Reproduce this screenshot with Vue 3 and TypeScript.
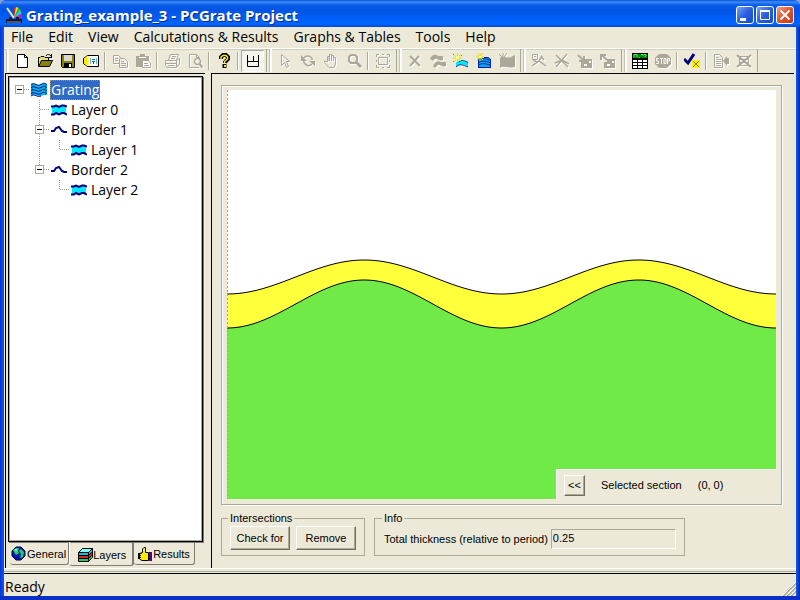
<script setup lang="ts">
import { computed, ref } from 'vue'

interface Shape { d: string; f?: string; s?: string; w?: number }
interface Tool { icon: string; label: string; off?: boolean; pressed?: boolean; sep?: boolean }
interface Node { id: string; label: string; icon: string; cells: string[]; parent?: string; open?: boolean }

const G = '#aca899'
const K = '#000000'
const N = '#00007b'

const icons: Record<string, Shape[]> = {
  app: [
    { d: 'M1 1L8 11', s: '#e8e8f0', w: 2 }, { d: 'M8 11L8 1L11 0Z', f: '#e02020' }, { d: 'M8 11L10 0L13 1Z', f: '#f0e020' },
    { d: 'M8 11L12 1L15 3Z', f: '#20c040' }, { d: 'M8 11L14 3L16 7Z', f: '#20d0e8' }, { d: 'M8 11L16 6L16 11Z', f: '#c020c0' },
    { d: 'M0 12H3V10H6V12H10V10H13V12H16V16H0Z', f: '#181830' }, { d: 'M1 15H15', s: '#909098' },
  ],
  new: [{ d: 'M3.5 1.5H10.5L13.5 4.5V14.5H3.5Z', f: '#fff', s: K }, { d: 'M10.5 1.5V4.5H13.5', s: K }],
  open: [
    { d: 'M1.5 13V4.5H3L4 3.5H7L8 4.5H11.5V7', f: '#e8e070', s: K }, { d: 'M1.5 13.5L4.5 7.5H15.5L12.5 13.5Z', f: '#848400', s: K },
    { d: 'M9 3C10 1 12 1 14 3M14.5 1V4.5M12 4.5H15', s: K },
  ],
  save: [{ d: 'M1.5 1.5H14.5V14.5H2.5L1.5 13.5Z', f: '#848400', s: K }, { d: 'M4 2H12V8H4Z', f: '#d8d8d0' }, { d: 'M4 10H12V15H4Z', f: K }, { d: 'M9 11H11V14H9Z', f: '#fff' }],
  props: [
    { d: 'M4.5 2.5H15.5V13.5H4.5L0.5 10.5V5.5Z', f: '#fff', s: K }, { d: 'M4 3V13L1 10V6Z', f: '#ffe600' },
    { d: 'M5 3V13', s: '#ffe600' }, { d: 'M7.5 5V11M13.5 5V11', s: '#60b8c8' }, { d: 'M9 6.5H12M9 8.5H12M10.5 9V11', s: '#0070a0' },
  ],
  copy: [{ d: 'M1.5 2.5H6.5L8.5 4.5V10.5H1.5Z', s: G }, { d: 'M3 5.5H6M3 7.5H6', s: G }, { d: 'M7.5 5.5H12.5L15.5 8.5V14.5H7.5Z', f: '#f3f1e7', s: G }, { d: 'M9 8.5H12M9 10.5H14M9 12.5H14', s: G }],
  paste: [{ d: 'M1 3H5V1H10V3H14V14H1Z', f: G }, { d: 'M4 4.5H11', s: '#fff' }, { d: 'M7.5 7.5H13L15.5 10V14.5H7.5Z', f: '#fff', s: G }, { d: 'M9 10.5H13M9 12.5H14', s: G }],
  print: [{ d: 'M4.5 7L6.5 1.5H14.5L12.5 7M8 3.5H12M7 5.5H11', s: G }, { d: 'M1.5 7.5H12.5L15.5 5.5V11L12.5 14.5H3L1.5 12Z', s: G }, { d: 'M2 10.5H12.5M4 12.5H11M12.5 7.5V14', s: G }],
  preview: [{ d: 'M2.5 1.5H9.5L12.5 4.5V6M2.5 1.5V14.5H12M9.5 1.5V4.5H12', s: G }, { d: 'M9.5 5.5H11.5L13.5 7.5V9.5L11.5 11.5H9.5L7.5 9.5V7.5Z', s: G, w: 1.5 }, { d: 'M12.5 11L15.5 14.5', s: G, w: 2 }],
  help: [{ d: 'M5 6V4L7 2H10L12 4V6L9 9V10', s: K, w: 4 }, { d: 'M6.5 11H10.5V15H6.5Z', f: K }, { d: 'M5 6V4L7 2.5H10L11.5 4V6L8.5 8.5V10', s: '#ffe600', w: 1.5 }, { d: 'M8 12H10V14H8Z', f: '#ffe600' }],
  frame: [{ d: 'M2.5 2V13.5H13.5V2M2.5 8.5H13.5M8.5 3V8', s: K }],
  arrow: [{ d: 'M4.5 1.5V12.5L7.5 9.5L9.5 14.5L11.5 13.5L9.5 8.5H13Z', s: G }],
  rotate: [{ d: 'M4 5C6 2 11 2 12.5 7M12 11C9 14 5 13 3.5 8', s: G, w: 1.5 }, { d: 'M1 2V8H7ZM15 13V8H9Z', f: G }],
  hand: [{ d: 'M4.5 9V3.5H6V8M6.5 8V1.5H8.5V8M8.5 2.5H10.5V8M10.5 4.5H12.5V11L11 14.5H6L1.5 9.5V8L4.5 9', s: G }],
  zoom: [{ d: 'M5 2H9L11 4V8L9 10H5L3 8V4Z', s: G, w: 2 }, { d: 'M10 9L15 14', s: G, w: 3 }],
  fit: [{ d: 'M3.5 4.5H12.5V11.5H3.5Z', s: G }, { d: 'M1.5 4V1.5H4M12 1.5H14.5V4M14.5 12V14.5H12M4 14.5H1.5V12M7 1.5H9M7 14.5H9M1.5 7V9M14.5 7V9', s: G }],
  cross: [{ d: 'M3 3L13 13M12 3L3 13', s: G, w: 2 }],
  layerOff: [{ d: 'M0 6C2 1 6 1 8 3L13 3V7C9 9 7 5 5 6L3 8Z', f: G }, { d: 'M3 13C6 7 9 8 11 9L16 9L16 13C12 15 10 11 8 12L5 15Z', f: G }],
  addLayer: [
    { d: 'M3 14V10C6 6 10 8 15 9V14C11 11 8 10 3 14Z', f: '#00e8ff' },
    { d: 'M3 14C7 10 10 12 15 14M6 9C9 6 12 8 15 9.5', s: '#0038a8' },
    { d: 'M1 2L8 8M8 1L1 9M4.5 0V9M0 5H9', s: '#f0dc00' }, { d: 'M3 3H6V6H3Z', f: '#ffff80' }, { d: 'M0 1H1V2H0ZM8 2H9V3H8ZM0 8H1V9H0Z', f: '#d86020' },
  ],
  addBlock: [
    { d: 'M2 6C5 3 9 7 12 4L15 6V15H2Z', f: '#00a8f0' },
    { d: 'M2 7.5C6 4.5 9 5.5 15 7.5M2 10C6 7 9 8 15 10M2 12.5C6 9.5 9 10.5 15 12.5M2 14.5H15M2.5 7V15M14.5 6V15M8 4.5L12 4.5L15 7', s: '#0020a0' },
    { d: 'M1 1L7 7M7 0L1 7M4 0V8M0 4H8', s: '#f0dc00' }, { d: 'M3 3H5V5H3Z', f: '#ffff80' },
  ],
  blockOff: [{ d: 'M1 5C5 2 8 6 12 4L16 2V14C10 16 6 12 1 15Z', f: G }, { d: 'M0 1L4 5M8 0L5 4M4 0V4', s: G }],
  edge: [{ d: 'M1.5 1.5H6.5V6.5H1.5ZM3 3.5H5', s: G }, { d: 'M1 13L8 8L15 13M8 8L11 3M6 9L2 7M10 3L13 7', s: G, w: 1.5 }],
  cut: [{ d: 'M2 2L14 14M13 1L2 14M1 10L8 7L15 11', s: G, w: 1.5 }],
  imp: [{ d: 'M7 6H15V15H4V9H7Z', f: G }, { d: 'M1 2L6 7M7 3V8H2', s: G, w: 2 }, { d: 'M7 11H10V13H7ZM12 8H14V10H12Z', f: '#fff' }],
  exp: [{ d: 'M7 6H15V15H4V9H7Z', f: G }, { d: 'M2 2L7 7M1 7V2H6', s: G, w: 2 }, { d: 'M7 11H10V13H7ZM12 8H14V10H12Z', f: '#fff' }],
  calc: [{ d: 'M0 0H16V16H0Z', f: K }, { d: 'M1 1H15V5H1Z', f: '#008000' }, { d: 'M2 4.5V1.5H5V4.5M7 4.5H8M9 1.5H11V3M12 1.5H14L13 4.5', s: '#40ff40' }, { d: 'M1 7H5V9H1ZM6 7H10V9H6ZM11 7H15V9H11ZM1 10H5V12H1ZM6 10H10V12H6ZM11 10H15V12H11ZM1 13H5V15H1ZM6 13H10V15H6ZM11 13H15V15H11Z', f: '#fff' }],
  stop: [{ d: 'M4 1H12L16 5V11L12 15H4L0 11V5Z', f: G }, { d: 'M4 5.5H1.5V8H3.5V10.5H1M5 5.5H8M6.5 5V11M9 5.5H11V10.5H9ZM12.5 11V5.5H14.5V8H13', s: '#fff' }],
  check: [{ d: 'M0 6L4 10L10 1', s: N, w: 3 }, { d: 'M8 7H16V15H8Z', f: '#ffee00' }, { d: 'M9 8L15 14M15 8L9 14', s: '#808000' }],
  report: [{ d: 'M1.5 1.5H6.5L9.5 4.5V14.5H1.5ZM3 4.5H6M3 6.5H8M3 8.5H8M3 10.5H8M3 12.5H8', s: G }, { d: 'M10 8L14 3V13ZM14 5H16V11H14Z', f: G }],
  clear: [{ d: 'M1 2L15 14M15 2L1 14', s: G, w: 2 }, { d: 'M3 3.5H13M3 6.5H13M3 9.5H13M3 12.5H13M3.5 3V13M12.5 3V13', s: G }],
  grating: [{ d: 'M0 2C4 0 6 5 10 2C12 1 14 1 16 2V13C12 12 10 16 6 13C4 12 2 13 0 14Z', f: '#00b8f0' }, { d: 'M0 2.5C4 0 6 5 10 2.5S14 2 16 2.5M0 5.5C4 3 6 8 10 5.5S14 5 16 5.5M0 8.5C4 6 6 11 10 8.5S14 8 16 8.5M0 11.5C4 9 6 14 10 11.5S14 11 16 11.5M0 14C4 11 6 16 10 14', s: N }, { d: 'M1 2V14M14.5 3V13', s: '#0068b8' }],
  layer: [{ d: 'M1 4C5 2 7 6 11 3L15 4V12H1Z', f: '#00e8ff' }, { d: 'M0 4.5H3L5 3.5L8 5L11 3.5H13L16 4.5M0 12.5H3L5 11L8 12.5L11 11H13L16 12.5', s: N, w: 2 }],
  border: [{ d: 'M0 9H3L5 6L8 5L11 9L13 10H16', s: N, w: 2 }],
  globe: [{ d: 'M5 1H10L14 5V10L10 14H5L1 10V5Z', f: '#0018b0', s: '#000040' }, { d: 'M5 2H8L7 5L8 7L5 9L3 6L2 4ZM10 3L13 6L12 11L9 12L10 8L8 5Z', f: '#20d060' }, { d: 'M4 3H6V5H4Z', f: '#80f0ff' }],
  stack: [{ d: 'M1.5 5.5L5.5 1.5H15.5L11.5 5.5Z', f: '#80f8ff', s: K }, { d: 'M1.5 5.5H11.5V8.5H1.5ZM11.5 5.5L15.5 1.5V4.5L11.5 8.5', f: '#00c8d8', s: K }, { d: 'M1.5 8.5H11.5V11.5H1.5ZM11.5 8.5L15.5 4.5V7.5L11.5 11.5', f: '#e02020', s: K }, { d: 'M1.5 11.5H11.5V14.5H1.5ZM11.5 11.5L15.5 7.5V10.5L11.5 14.5', f: '#20d040', s: K }],
  thumb: [{ d: 'M2.5 7.5L5.5 6.5V3L7 1.5H8.5V6.5H11.5V14.5H5L2.5 13Z', f: '#ffee00', s: K }, { d: 'M12 6H15V15H12Z', f: '#600070' }, { d: 'M1 7.5H4.5M1.5 8V13M2.5 9.5H4M2.5 11.5H4', s: K }],
}

const bands: Tool[][] = [
  [
    { icon: 'new', label: 'New' }, { icon: 'open', label: 'Open' }, { icon: 'save', label: 'Save' }, { icon: 'props', label: 'Properties' },
    { icon: 'copy', label: 'Copy', off: true, sep: true }, { icon: 'paste', label: 'Paste', off: true },
    { icon: 'print', label: 'Print', off: true, sep: true }, { icon: 'preview', label: 'Print preview', off: true },
    { icon: 'help', label: 'Help topics', sep: true }, { icon: 'frame', label: 'Show panel', pressed: true, sep: true },
  ],
  [
    { icon: 'arrow', label: 'Select', off: true }, { icon: 'rotate', label: 'Rotate', off: true }, { icon: 'hand', label: 'Pan', off: true },
    { icon: 'zoom', label: 'Zoom', off: true }, { icon: 'fit', label: 'Fit', off: true, sep: true },
  ],
  [
    { icon: 'cross', label: 'Delete', off: true }, { icon: 'layerOff', label: 'Split layer', off: true }, { icon: 'addLayer', label: 'Add layer' },
    { icon: 'addBlock', label: 'Add block' }, { icon: 'blockOff', label: 'Edit block', off: true },
  ],
  [
    { icon: 'edge', label: 'Edit border', off: true }, { icon: 'cut', label: 'Remove border', off: true },
    { icon: 'imp', label: 'Import', off: true }, { icon: 'exp', label: 'Export', off: true },
  ],
  [
    { icon: 'calc', label: 'Calculate' }, { icon: 'stop', label: 'Stop', off: true }, { icon: 'check', label: 'Verify', sep: true },
    { icon: 'report', label: 'Report', off: true, sep: true }, { icon: 'clear', label: 'Clear results', off: true },
  ],
]

const menus = ['File', 'Edit', 'View', 'Calcutations & Results', 'Graphs & Tables', 'Tools', 'Help']

const nodes: Node[] = [
  { id: 'g', label: 'Grating', icon: 'grating', cells: ['dash'], open: true },
  { id: 'l0', label: 'Layer 0', icon: 'layer', cells: ['', 'tee'], parent: 'g' },
  { id: 'b1', label: 'Border 1', icon: 'border', cells: ['', 'tee'], parent: 'g', open: true },
  { id: 'l1', label: 'Layer 1', icon: 'layer', cells: ['', 'bar', 'elbow'], parent: 'b1' },
  { id: 'b2', label: 'Border 2', icon: 'border', cells: ['', 'elbow'], parent: 'g', open: true },
  { id: 'l2', label: 'Layer 2', icon: 'layer', cells: ['', '', 'elbow'], parent: 'b2' },
]
const lines: Record<string, string> = {
  '': '', dash: 'M10 9.5H20', tee: 'M9.5 0V20M10 9.5H20', bar: 'M9.5 0V20', elbow: 'M9.5 0V10M10 9.5H20',
}
const closed = ref<string[]>([])
const selected = ref('g')
const shown = computed(() => nodes.filter((n) => {
  for (let p = n.parent; p; p = nodes.find((m) => m.id === p)?.parent) if (closed.value.includes(p)) return false
  return true
}))
function toggle(id: string) {
  closed.value = closed.value.includes(id) ? closed.value.filter((c) => c !== id) : [...closed.value, id]
}

const tabs = [
  { id: 'General', icon: 'globe' },
  { id: 'Layers', icon: 'stack' },
  { id: 'Results', icon: 'thumb' },
]
const tab = ref('Layers')
const thickness = ref('0.25')

function wave(mid: number, amp: number): string {
  const pts: string[] = []
  for (let x = 0; x <= 549; x += 3) pts.push(`${x} ${(mid + amp * Math.cos((2 * Math.PI * x) / 274.5)).toFixed(2)}`)
  return 'M' + pts.join('L')
}
const upper = wave(187, 17)
const lower = wave(214, 24)
</script>

<template>
  <div class="window">
    <header class="title">
      <svg class="ico" viewBox="0 0 16 16" aria-hidden="true">
        <path v-for="(p, i) in icons.app" :key="i" :d="p.d" :fill="p.f || 'none'" :stroke="p.s || 'none'" :stroke-width="p.w || 1" />
      </svg>
      <h1>Grating_example_3 - PCGrate Project</h1>
      <button class="cap" aria-label="Minimize"><svg viewBox="0 0 16 16"><path d="M3 11H9V14H3Z" fill="#fff" /></svg></button>
      <button class="cap" aria-label="Maximize"><svg viewBox="0 0 16 16"><path d="M3.5 3.5H12.5V12.5H3.5Z" fill="none" stroke="#fff" /><path d="M3 3H13V5H3Z" fill="#fff" /></svg></button>
      <button class="cap close" aria-label="Close"><svg viewBox="0 0 16 16"><path d="M3.5 3.5L12.5 12.5M12.5 3.5L3.5 12.5" stroke="#fff" stroke-width="2" /></svg></button>
    </header>

    <nav class="menu">
      <button v-for="m in menus" :key="m">{{ m }}</button>
    </nav>

    <div class="toolbar" role="toolbar">
      <div v-for="(b, bi) in bands" :key="bi" class="band">
        <template v-for="t in b" :key="t.icon">
          <span v-if="t.sep" class="sep"></span>
          <button class="tool" :class="{ off: t.off, pressed: t.pressed }" :disabled="t.off" :aria-label="t.label">
            <svg class="ico" viewBox="0 0 16 16">
              <path v-for="(p, i) in icons[t.icon]" :key="i" :d="p.d" :fill="p.f || 'none'" :stroke="p.s || 'none'" :stroke-width="p.w || 1" />
            </svg>
          </button>
        </template>
      </div>
    </div>

    <main class="work">
      <aside class="side">
        <ul class="tree">
          <li v-for="n in shown" :key="n.id">
            <span v-for="(c, ci) in n.cells" :key="ci" class="cell">
              <svg viewBox="0 0 20 20"><path :d="lines[c]" fill="none" stroke="#9c9a8c" stroke-dasharray="1 1" /></svg>
              <button v-if="n.open && ci === n.cells.length - 1" class="exp" :aria-label="'Toggle ' + n.label" @click="toggle(n.id)">
                <svg viewBox="0 0 7 7"><path :d="closed.includes(n.id) ? 'M1 3.5H6M3.5 1V6' : 'M1 3.5H6'" stroke="#000" /></svg>
              </button>
            </span>
            <svg class="ico" viewBox="0 0 16 16">
              <path v-for="(p, i) in icons[n.icon]" :key="i" :d="p.d" :fill="p.f || 'none'" :stroke="p.s || 'none'" :stroke-width="p.w || 1" />
            </svg>
            <button class="label" :class="{ sel: selected === n.id }" @click="selected = n.id">{{ n.label }}</button>
          </li>
        </ul>
        <div class="tabs" role="tablist">
          <button v-for="t in tabs" :key="t.id" role="tab" :class="{ on: tab === t.id }" :aria-selected="tab === t.id" @click="tab = t.id">
            <svg class="ico" viewBox="0 0 16 16">
              <path v-for="(p, i) in icons[t.icon]" :key="i" :d="p.d" :fill="p.f || 'none'" :stroke="p.s || 'none'" :stroke-width="p.w || 1" />
            </svg>{{ t.id }}
          </button>
        </div>
      </aside>

      <section class="view">
        <div class="frame">
          <div class="plot">
            <svg viewBox="0 0 549 409" preserveAspectRatio="none" role="img" aria-label="Grating profile">
              <path :d="upper + 'V409H0Z'" fill="#ffff3c" />
              <path :d="lower + 'V409H0Z'" fill="#6fea46" />
              <path :d="upper" class="curve" />
              <path :d="lower" class="curve" />
              <path d="M0.5 0V409" stroke="#a0a098" stroke-dasharray="2 2" />
            </svg>
            <div class="section">
              <button class="push">&lt;&lt;</button>
              <span>Selected section</span>
              <span>(0, 0)</span>
            </div>
          </div>
        </div>
        <div class="groups">
          <fieldset class="inter">
            <legend>Intersections</legend>
            <button class="push">Check for</button>
            <button class="push">Remove</button>
          </fieldset>
          <fieldset class="info">
            <legend>Info</legend>
            <label for="thick">Total thickness (relative to period)</label>
            <input id="thick" v-model="thickness" type="text" readonly />
          </fieldset>
        </div>
      </section>
    </main>

    <footer class="status">
      <span>Ready</span>
      <svg viewBox="0 0 14 14" aria-hidden="true">
        <path d="M1 14L14 1M5 14L14 5M9 14L14 9" stroke="#aca899" stroke-width="2" />
        <path d="M0 14L14 0M4 14L14 4M8 14L14 8" stroke="#fff" />
      </svg>
    </footer>
  </div>
</template>

<style>
body { margin: 0; background: #7e9ce0; }
</style>

<style scoped>
* { box-sizing: border-box; }
.window {
  display: flex;
  flex-direction: column;
  min-height: 100vh;
  padding: 0 4px 4px;
  background: linear-gradient(90deg, #0831d9, #0855e8 3px, #0855e8 calc(100% - 3px), #001ea0);
  box-shadow: inset 0 -4px 0 #0a2fc4;
  border-radius: 7px 7px 0 0;
  font-family: "Open Sans", "Noto Sans", sans-serif;
  font-size: 14px;
  color: #000;
}
button { padding: 0; border: 0; background: none; font: inherit; color: inherit; }
.ico { display: block; flex: none; width: 16px; height: 16px; }

.title {
  display: flex;
  align-items: center;
  gap: 2px;
  height: 27px;
  margin: 0 -4px;
  padding: 3px 6px 0;
  border-radius: 7px 7px 0 0;
  background: linear-gradient(#0a50d8, #3c8cf8 2px, #0a5ce8 5px, #0054e3 10px, #0060fa 20px, #0066ff 24px, #0048d0);
}
.title h1 {
  flex: 1;
  margin: 0 0 0 2px;
  font: bold 15px/20px "Open Sans", "Noto Sans", sans-serif;
  color: #fff;
  text-shadow: 1px 1px 0 #0a2c90;
}
.cap {
  width: 18px;
  height: 18px;
  border: 1px solid #fff;
  border-radius: 3px;
  background: linear-gradient(135deg, #7ba2f0, #2a5fe0 50%, #1c48c8);
}
.cap svg { display: block; width: 16px; height: 16px; }
.cap.close { background: linear-gradient(135deg, #f0a088, #e0522c 50%, #c03810); }

.menu {
  display: flex;
  gap: 15px;
  height: 21px;
  padding: 0 7px 2px;
  background: #ece9d8;
}
.menu button { line-height: 18px; white-space: nowrap; }

.toolbar {
  display: flex;
  height: 25px;
  padding: 0 0 1px 3px;
  background: #ece9d8;
  border-top: 1px solid #fff;
  box-shadow: inset 0 1px 0 #d0cdbd;
}
.band {
  display: flex;
  align-items: center;
  padding: 0 2px;
  margin-right: 3px;
  border-right: 1px solid #aca899;
  border-left: 1px solid #fff;
  box-shadow: inset 1px 0 0 #fbfaf5, -1px 0 0 #c4c1b0;
}
.tool { display: grid; place-items: center; width: 23px; height: 22px; }
.tool.off .ico { filter: drop-shadow(1px 1px 0 #fff); }
.tool.pressed { background: #f6f4ec; border: 1px solid; border-color: #aca899 #fff #fff #aca899; }
.sep { width: 6px; height: 18px; background: linear-gradient(90deg, transparent 2px, #aca899 2px, #aca899 3px, #fff 3px, #fff 4px, transparent 4px); }

.work { display: flex; flex: 1; gap: 6px; padding-left: 1px; background: #ece9d8; }
.side {
  display: flex;
  flex-direction: column;
  flex: none;
  width: 200px;
  padding: 2px 0 0 2px;
  border: solid #000;
  border-width: 1px 0 0 1px;
}
.tree {
  flex: 1;
  margin: 0 2px 0 0;
  padding: 3px 0 3px 1px;
  list-style: none;
  background: #fff;
  border: 1px solid #000;
  outline: 1px solid #aca899;
  outline-offset: -2px;
  box-shadow: 1px 1px 0 #807d70;
}
.tree li { display: flex; align-items: center; height: 20px; }
.cell { display: grid; width: 20px; height: 20px; place-items: center; }
.cell > * { grid-area: 1 / 1; }
.cell > svg { width: 20px; height: 20px; }
.exp { width: 9px; height: 9px; margin: 0 1px 1px 0; border: 1px solid #aca899; background: #fff; }
.exp svg { display: block; width: 7px; height: 7px; }
.tree .ico { margin: 0 3px 0 1px; }
.label { height: 20px; padding: 0 1px; line-height: 20px; white-space: nowrap; }
.label.sel { background: #316ac5; color: #fff; outline: 1px dotted #c08a30; outline-offset: -1px; }

.tabs {
  display: flex;
  align-items: flex-start;
  height: 26px;
  padding-left: 2px;
  font: 11px/16px "Liberation Sans", sans-serif;
}
.tabs button {
  display: flex;
  align-items: center;
  height: 22px;
  margin-top: 1px;
  padding: 0 2px 0 1px;
  border: solid #807d70;
  border-width: 0 1px 1px 0;
  border-radius: 0 0 3px 3px;
}
.tabs .on { height: 24px; margin-top: 0; padding: 2px 6px 0 7px; border-left: 1px solid #fff; border-right: 2px solid #807d70; }
.tabs .on + button { padding: 0 4px 0 3px; }

.view {
  display: flex;
  flex-direction: column;
  flex: 1;
  gap: 7px;
  min-width: 0;
  margin-right: 2px;
  padding: 11px 12px 12px 9px;
  border: solid #000;
  border-width: 1px 0 0 1px;
  font: 11px/13px "Liberation Sans", sans-serif;
}
.frame {
  display: flex;
  flex: 1;
  padding: 4px 5px 5px;
  border: 1px solid #aca899;
  box-shadow: 1px 1px 0 #fff, inset 1px 1px 0 #fff;
}
.plot { position: relative; flex: 1; min-height: 200px; background: #fff; }
.plot > svg { position: absolute; inset: 0; width: 100%; height: 100%; }
.curve { fill: none; stroke: #000; vector-effect: non-scaling-stroke; }
.section {
  position: absolute;
  right: 0;
  bottom: 0;
  display: flex;
  align-items: center;
  gap: 16px;
  width: 220px;
  height: 30px;
  padding: 2px 6px 0 7px;
  background: #ece9d8;
  border: solid #fff;
  border-width: 1px 0 0 1px;
}
.push {
  background: #ece9d8;
  border: 1px solid;
  border-color: #fff #716f64 #716f64 #fff;
  box-shadow: inset -1px -1px 0 #aca899;
}
.section .push { width: 21px; height: 21px; }

.groups { display: flex; gap: 9px; }
fieldset {
  display: flex;
  align-items: center;
  height: 44px;
  margin: 0;
  padding: 0 8px 4px;
  border: 1px solid #aca899;
  min-width: 0;
}
legend { padding: 0 2px; margin-left: -2px; }
.inter { gap: 6px; }
.inter .push { width: 60px; height: 24px; }
.info { gap: 3px; padding: 0 8px 2px 9px; }
.info input {
  width: 125px;
  height: 20px;
  padding: 0 1px 3px;
  border: 1px solid;
  border-color: #aca899 #fff #fff #aca899;
  background: #ece9d8;
  font: inherit;
}

.status {
  display: flex;
  align-items: flex-end;
  justify-content: space-between;
  height: 28px;
  padding-left: 1px;
  background: linear-gradient(#fff 1px, #ece9d8 1px, #ece9d8 3px, #aca899 3px, #aca899 4px, #ece9d8 4px, #ece9d8 5px, #000 5px, #000 6px, #ece9d8 6px);
}
.status span { line-height: 19px; }
.status svg { width: 14px; height: 14px; }
</style>
